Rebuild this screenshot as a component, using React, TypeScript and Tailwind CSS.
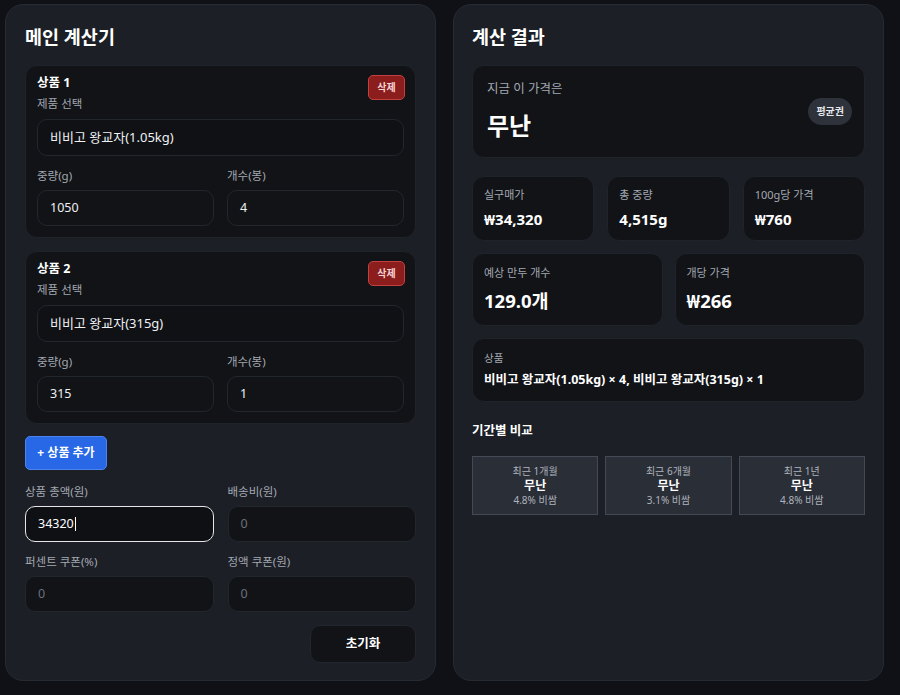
import React from "react";

const font = { fontFamily: '"Noto Sans", "Noto Sans CJK KR", sans-serif' };

function Field({ label, value, muted, focused }: { label: string; value: string; muted?: boolean; focused?: boolean }) {
  return (
    <div className="flex-1 min-w-0">
      <div className="text-[11.5px] leading-4 text-[#a3a8b1] mb-[6px]">{label}</div>
      <div
        className={
          "h-[36px] rounded-[10px] flex items-center px-3 text-[12.5px] " +
          (focused
            ? "border-[1.5px] border-[#e6e6e6] bg-[#0e1014] text-white"
            : "border border-[#22262d] bg-[#111317] " + (muted ? "text-[#6b707a]" : "text-[#eef0f3]"))
        }
      >
        {value}
        {focused && <span className="w-px h-[14px] bg-white ml-px" />}
      </div>
    </div>
  );
}

function ProductCard({ n, name, weight, count }: { n: number; name: string; weight: string; count: string }) {
  return (
    <div className="relative rounded-[12px] bg-[#111317] border border-[#1f232a] px-[11px] pt-[8px] pb-[11px]">
      <button className="absolute right-[10px] top-[9px] h-[25px] w-[37px] rounded-[5px] bg-[#8c1d1d] border border-[#c24040] text-[10px] font-bold text-[#f4d4d4]">
        삭제
      </button>
      <div className="text-[12.5px] font-bold text-white leading-[18px]">상품 {n}</div>
      <div className="text-[11.5px] leading-4 text-[#a3a8b1] mt-[4px]">제품 선택</div>
      <div className="mt-[7px] h-[37px] rounded-[10px] border border-[#22262d] bg-[#0f1115] flex items-center px-3 text-[13px] text-[#eef0f3]">
        {name}
      </div>
      <div className="flex gap-[13px] mt-[12px]">
        <Field label="중량(g)" value={weight} />
        <Field label="개수(봉)" value={count} />
      </div>
    </div>
  );
}

function Stat({ label, value, big }: { label: string; value: string; big?: boolean }) {
  return (
    <div className={"flex-1 rounded-[12px] bg-[#111317] border border-[#1f232a] px-[11px] " + (big ? "h-[73px] pt-[11px]" : "h-[65px] pt-[10px]")}>
      <div className="text-[11px] leading-4 text-[#a3a8b1]">{label}</div>
      <div className={"font-bold text-white " + (big ? "text-[18.5px] mt-[8px] leading-6" : "text-[15px] mt-[6px] leading-5")}>{value}</div>
    </div>
  );
}

function Compare({ label, sub }: { label: string; sub: string }) {
  return (
    <div className="flex-1 h-[59px] bg-[#2a2e37] border border-[#434955] flex flex-col items-center justify-center">
      <div className="text-[10px] leading-[13px] text-[#aeb3bc]">{label}</div>
      <div className="text-[12px] leading-4 font-bold text-white">무난</div>
      <div className="text-[10px] leading-[13px] text-[#aeb3bc]">{sub}</div>
    </div>
  );
}

export default function App() {
  return (
    <div style={font} className="w-[900px] h-[695px] bg-[#0f1116] flex gap-[17px] pl-[5px] pt-[4px] overflow-hidden">
      {/* Left */}
      <div className="w-[431px] h-[677px] rounded-[18px] bg-[#1c1f26] border border-[#262a32] px-[19px] pt-[20px]">
        <h1 className="text-[18.5px] font-bold text-white leading-6">메인 계산기</h1>
        <div className="mt-[16px] flex flex-col gap-[13px]">
          <ProductCard n={1} name="비비고 왕교자(1.05kg)" weight="1050" count="4" />
          <ProductCard n={2} name="비비고 왕교자(315g)" weight="315" count="1" />
        </div>
        <button className="mt-[12px] h-[34px] w-[82px] rounded-[5px] bg-[#2868e6] border border-[#4a85f0] text-[12px] font-bold text-white">
          + 상품 추가
        </button>
        <div className="flex gap-[14px] mt-[14px]">
          <Field label="상품 총액(원)" value="34320" focused />
          <Field label="배송비(원)" value="0" muted />
        </div>
        <div className="flex gap-[14px] mt-[12px]">
          <Field label="퍼센트 쿠폰(%)" value="0" muted />
          <Field label="정액 쿠폰(원)" value="0" muted />
        </div>
        <div className="flex justify-end mt-[13px]">
          <button className="h-[38px] w-[106px] rounded-[10px] bg-[#111317] border border-[#22262d] text-[12.5px] font-bold text-white">
            초기화
          </button>
        </div>
      </div>

      {/* Right */}
      <div className="w-[431px] h-[677px] rounded-[18px] bg-[#1c1f26] border border-[#262a32] px-[18px] pt-[20px]">
        <h1 className="text-[18.5px] font-bold text-white leading-6">계산 결과</h1>
        <div className="mt-[16px] h-[93px] rounded-[12px] bg-[#111317] border border-[#1f232a] pl-[14px] pr-[12px] flex items-center justify-between">
          <div>
            <div className="text-[12.5px] leading-4 text-[#a3a8b1]">지금 이 가격은</div>
            <div className="text-[24px] font-bold text-white leading-8 mt-[13px]">무난</div>
          </div>
          <div className="h-[27px] px-[8px] rounded-full bg-[#2e323a] flex items-center text-[10px] font-bold text-[#e5e7eb]">
            평균권
          </div>
        </div>
        <div className="flex gap-[13px] mt-[18px]">
          <Stat label="실구매가" value="₩34,320" />
          <Stat label="총 중량" value="4,515g" />
          <Stat label="100g당 가격" value="₩760" />
        </div>
        <div className="flex gap-[12px] mt-[12px]">
          <Stat label="예상 만두 개수" value="129.0개" big />
          <Stat label="개당 가격" value="₩266" big />
        </div>
        <div className="mt-[12px] h-[64px] rounded-[12px] bg-[#111317] border border-[#1f232a] px-[11px] pt-[11px]">
          <div className="text-[10.5px] leading-4 text-[#a3a8b1]">상품</div>
          <div className="text-[12.5px] font-bold text-white mt-[4px] leading-5">
            비비고 왕교자(1.05kg) × 4, 비비고 왕교자(315g) × 1
          </div>
        </div>
        <div className="mt-[19px] text-[12.5px] font-bold text-white leading-5">기간별 비교</div>
        <div className="flex gap-[7px] mt-[15px]">
          <Compare label="최근 1개월" sub="4.8% 비쌈" />
          <Compare label="최근 6개월" sub="3.1% 비쌈" />
          <Compare label="최근 1년" sub="4.8% 비쌈" />
        </div>
      </div>
    </div>
  );
}
